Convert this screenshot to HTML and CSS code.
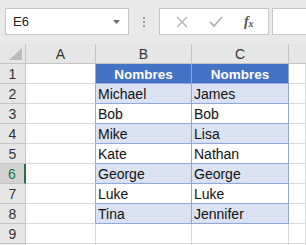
FILE: index.html
```html
<!DOCTYPE html>
<html>
<head>
<meta charset="utf-8">
<link rel="stylesheet" href="styles.css">
</head>
<body>
<div class="app">
  <div class="toolbar">
    <div class="namebox">
      <span class="ref">E6</span>
      <svg class="caret" width="7" height="4" viewBox="0 0 7 4"><path d="M0 0H7L3.5 4Z" fill="#6b6b6b"/></svg>
    </div>
    <div class="dots"><i></i><i></i><i></i></div>
    <div class="fbuttons">
      <svg class="ico" width="12" height="12" viewBox="0 0 12 12"><path d="M1 1L11 11M11 1L1 11" stroke="#b3b3b3" stroke-width="1.4" fill="none"/></svg>
      <svg class="ico" width="14" height="12" viewBox="0 0 14 12"><path d="M1 6L5 10L13 1" stroke="#b3b3b3" stroke-width="1.8" fill="none"/></svg>
      <span class="fx">f<sub>x</sub></span>
    </div>
    <div class="finput"></div>
  </div>
  <div class="sheet">
    <div class="corner"><span class="tri"></span></div>
    <div class="ch">A</div>
    <div class="ch">B</div>
    <div class="ch">C</div>
    <div class="ch last"></div>

    <div class="rh">1</div><div class="c tl"></div><div class="c th">Nombres</div><div class="c th tr">Nombres</div><div class="c"></div>
    <div class="rh">2</div><div class="c tl"></div><div class="c td band">Michael</div><div class="c td band tr">James</div><div class="c"></div>
    <div class="rh">3</div><div class="c tl"></div><div class="c td">Bob</div><div class="c td tr">Bob</div><div class="c"></div>
    <div class="rh">4</div><div class="c tl"></div><div class="c td band">Mike</div><div class="c td band tr">Lisa</div><div class="c"></div>
    <div class="rh">5</div><div class="c tl"></div><div class="c td">Kate</div><div class="c td tr">Nathan</div><div class="c"></div>
    <div class="rh sel">6</div><div class="c tl"></div><div class="c td band">George</div><div class="c td band tr">George</div><div class="c"></div>
    <div class="rh">7</div><div class="c tl"></div><div class="c td">Luke</div><div class="c td tr">Luke</div><div class="c"></div>
    <div class="rh">8</div><div class="c tl"></div><div class="c td band">Tina</div><div class="c td band tr">Jennifer</div><div class="c"></div>
    <div class="rh">9</div><div class="c"></div><div class="c"></div><div class="c"></div><div class="c"></div>
    <div class="rh"></div><div class="c"></div><div class="c"></div><div class="c"></div><div class="c"></div>
  </div>
</div>
</body>
</html>
```
FILE: styles.css
```css
* { box-sizing: border-box; }
html, body { margin: 0; padding: 0; }
body { background: #fff; font-family: "Liberation Sans", Arial, sans-serif; }
.app { width: 306px; height: 245px; overflow: hidden; background: #fff; }

.toolbar {
  height: 44px;
  background: #e9e9e9;
  display: flex;
  align-items: flex-start;
  padding: 8px 0 0 5px;
}
.namebox {
  width: 124px; height: 27px;
  background: #fff;
  border: 1px solid #c6c6c6;
  display: flex; align-items: center; justify-content: space-between;
  padding: 0 8px 0 7px;
  font-size: 13px; color: #222;
}
.dots {
  width: 30px; height: 27px;
  display: flex; flex-direction: column; align-items: center; justify-content: center; gap: 2px;
}
.dots i { display: block; width: 2px; height: 2px; background: #9a9a9a; }
.fbuttons {
  width: 110px; height: 27px;
  background: #fff;
  border: 1px solid #c6c6c6;
  display: flex; align-items: center; justify-content: space-around;
  padding: 0 4px 0 6px;
}
.fx { font-family: "Liberation Serif", serif; font-style: italic; font-weight: bold; font-size: 14px; color: #555; line-height: 1; }
.fx sub { font-size: 10px; vertical-align: -1px; }
.finput {
  flex: 1; height: 27px; margin-left: 3px;
  background: #fff; border: 1px solid #c6c6c6; border-right: none;
}

.sheet {
  display: grid;
  grid-template-columns: 26px 70px 96px 97px 17px;
  grid-template-rows: 20px repeat(10, 20px);
}
.corner, .ch, .rh {
  background: #e6e6e6;
  border-right: 1px solid #c4c4c4;
  border-bottom: 1px solid #c4c4c4;
  font-size: 14px; color: #333;
  display: flex; align-items: center; justify-content: center;
}
.corner { position: relative; }
.tri {
  position: absolute; right: 3px; bottom: 3px;
  width: 0; height: 0;
  border-left: 13px solid transparent;
  border-bottom: 12px solid #bcbcbc;
}
.ch.last { border-right: none; }
.rh.sel { background: #d2d2d2; color: #217346; border-right: 2px solid #217346; }

.c {
  background: #fff;
  border-right: 1px solid #d9d9d9;
  border-bottom: 1px solid #d9d9d9;
  font-size: 14px; color: #111;
  display: flex; align-items: center;
  padding: 1px 2px 0 2px;
  white-space: nowrap;
}
.c.tl { border-right-color: #8ea9db; }
.c.td { border-right-color: #8ea9db; border-bottom-color: #8ea9db; }
.c.band { background: #d9e1f2; }
.c.th {
  background: #4472c4; color: #fff; font-weight: bold;
  justify-content: center;
  border-right-color: #8ea9db; border-bottom-color: #8ea9db;
  font-size: 13.5px;
}
.c.tr { border-right-color: #8ea9db; }
```
